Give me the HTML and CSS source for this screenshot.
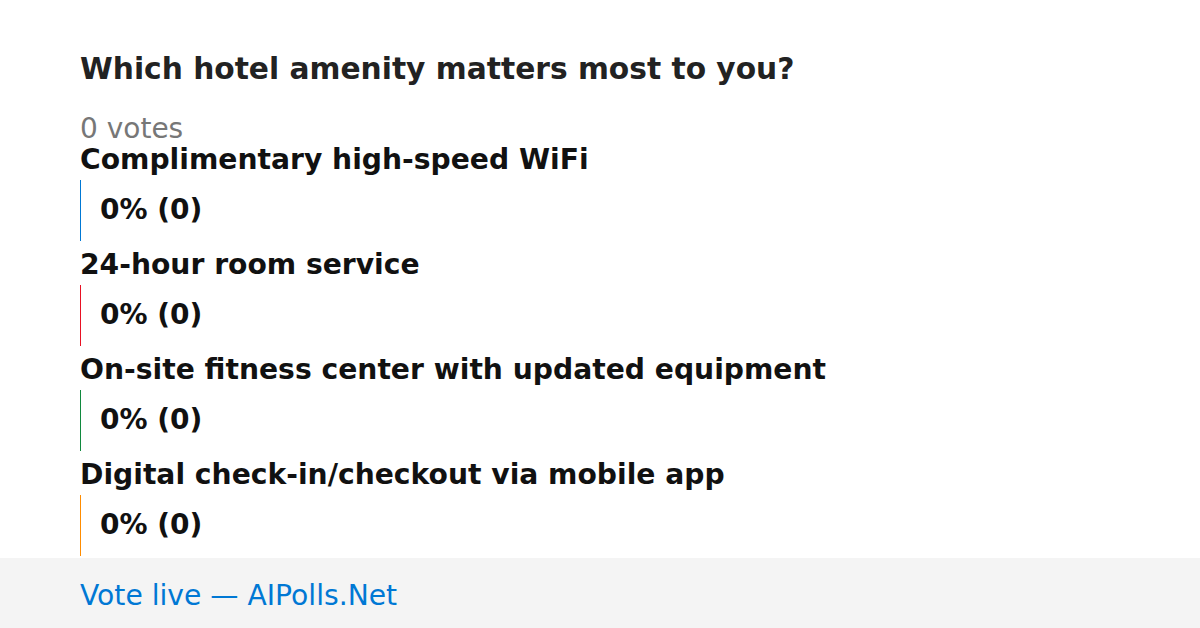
FILE: index.html
```html
<!DOCTYPE html>
<html lang="en">

<head>
    <meta charset="UTF-8">
    <meta name="viewport" content="width=device-width, initial-scale=1.0">
    <title>Which hotel amenity matters most to you?</title>
    <link rel="stylesheet" href="styles.css">
</head>

<body>
    <main class="poll">
        <h1 class="poll-title">Which hotel amenity matters most to you?</h1>
        <p class="poll-total">0 votes</p>
        <ul class="options">
            <li class="option">
                <div class="option-label">Complimentary high-speed WiFi</div>
                <div class="option-bar bar-blue"><span class="option-value">0% (0)</span></div>
            </li>
            <li class="option">
                <div class="option-label">24-hour room service</div>
                <div class="option-bar bar-red"><span class="option-value">0% (0)</span></div>
            </li>
            <li class="option">
                <div class="option-label">On-site fitness center with updated equipment</div>
                <div class="option-bar bar-green"><span class="option-value">0% (0)</span></div>
            </li>
            <li class="option">
                <div class="option-label">Digital check-in/checkout via mobile app</div>
                <div class="option-bar bar-orange"><span class="option-value">0% (0)</span></div>
            </li>
        </ul>
    </main>
    <footer class="footer">
        <a class="footer-link" href="#">Vote live — AIPolls.Net</a>
    </footer>
</body>

</html>
```

FILE: styles.css
```css
html,
body {
    margin: 0;
    padding: 0;
}

body {
    display: flex;
    flex-direction: column;
    height: 100vh;
    overflow: hidden;
    background: #fff;
    font-family: "DejaVu Sans", sans-serif;
}

ul {
    list-style: none;
    padding: 0;
    margin: 0;
}

.poll {
    flex: 1;
    min-height: 0;
    padding: 51px 80px 0;
}

.poll-title {
    margin: 0;
    font-size: 29.7px;
    line-height: 36px;
    font-weight: bold;
    color: #222;
}

.poll-total {
    margin: 26px 0 0;
    font-size: 28px;
    line-height: 32px;
    color: #777;
}

.options {
    display: flex;
    flex-direction: column;
    gap: 9px;
}

.option-label {
    font-size: 28.2px;
    line-height: 30px;
    font-weight: bold;
    color: #111;
}

.option-bar {
    display: flex;
    align-items: center;
    box-sizing: border-box;
    height: 61px;
    margin-top: 5px;
    padding: 0 0 3px 19px;
    border-left: 1px solid #0078d4;
}

.option-value {
    font-size: 28px;
    font-weight: bold;
    color: #111;
}

.bar-blue {
    border-color: #0078d4;
}

.bar-red {
    border-color: #e81123;
}

.bar-green {
    border-color: #10893e;
}

.bar-orange {
    border-color: #ff8c00;
}

.footer {
    display: flex;
    flex-shrink: 0;
    align-items: center;
    box-sizing: border-box;
    height: 70px;
    padding: 4px 0 0 80px;
    background: #f4f4f4;
}

.footer-link {
    font-size: 28.2px;
    color: #0078d4;
    text-decoration: none;
}
```
